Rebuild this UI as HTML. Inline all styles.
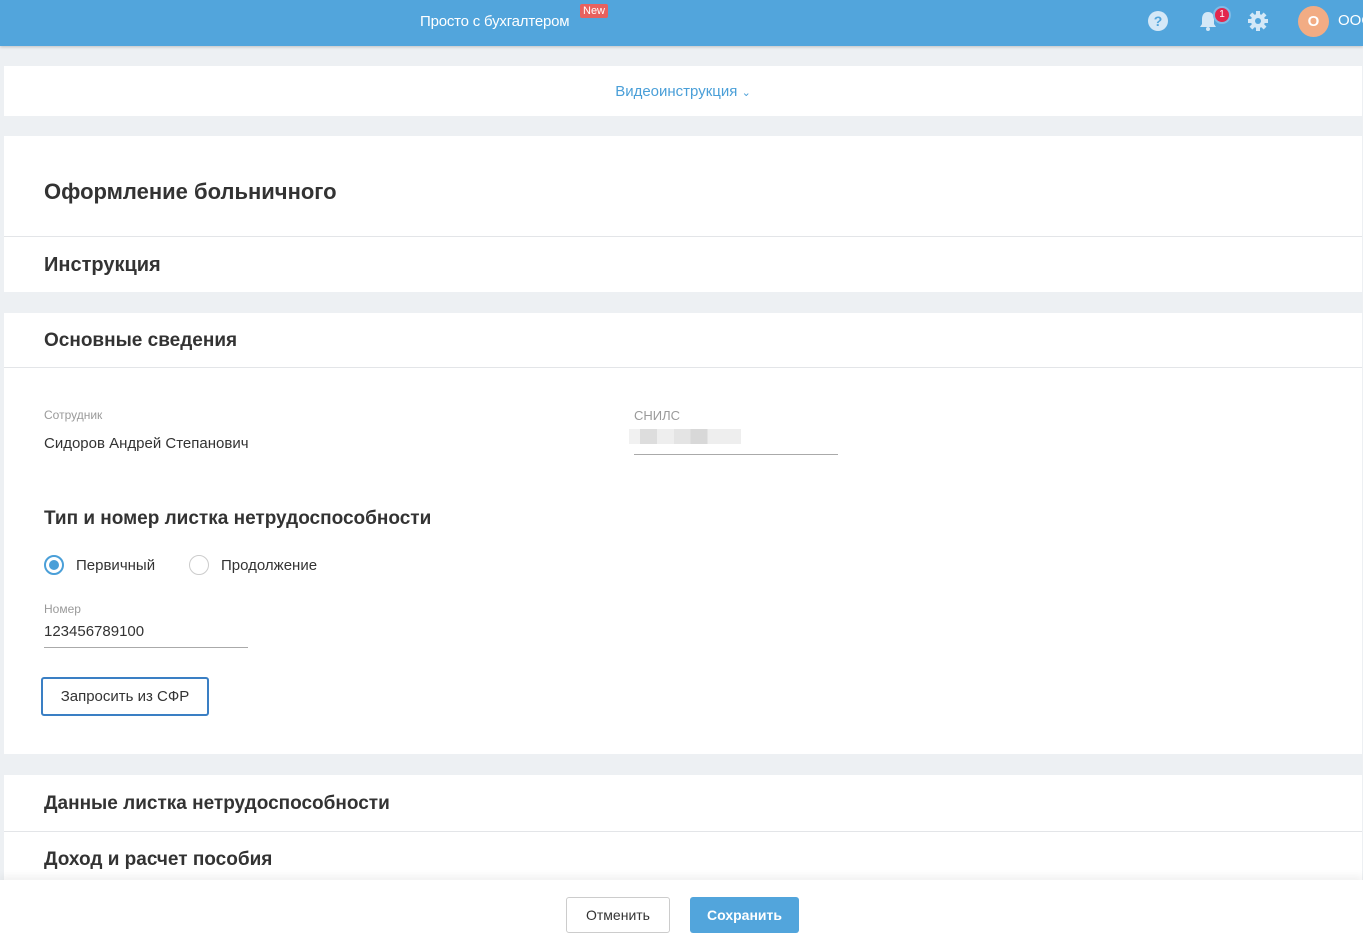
<!DOCTYPE html>
<html><head><meta charset="utf-8"><style>
*{margin:0;padding:0;box-sizing:border-box}
body{width:1363px;height:943px;overflow:hidden;background:#edf0f3;font-family:"Liberation Sans",sans-serif;color:#333;position:relative}
.hdr{position:absolute;left:0;top:0;width:1363px;height:46px;background:#52a5dc;box-shadow:0 1px 3px rgba(0,0,0,.2)}
.card{position:absolute;left:4px;width:1358px;background:#fff}
.t{position:absolute;left:40px;font-weight:bold;color:#333}
.div{position:absolute;left:0;right:0;height:1px;background:#e3e5e8}
.lbl{position:absolute;font-size:12px;color:#9a9a9a}
.txt{position:absolute;font-size:15px;color:#333}
</style></head><body>
<div class="hdr">
<div style="position:absolute;left:420px;top:13px;color:#fff;font-size:15px;letter-spacing:-.2px">Просто с бухгалтером</div>
<div style="position:absolute;left:580px;top:4px;background:#e8615e;color:#fff;font-size:11px;padding:1px 3px;border-radius:2px">New</div>
<svg style="position:absolute;left:1147px;top:10px" width="22" height="22" viewBox="0 0 22 22"><circle cx="11" cy="11" r="10" fill="#d4e8f7"/><text x="11" y="16" text-anchor="middle" font-size="14" font-weight="bold" fill="#52a5dc" font-family="Liberation Sans">?</text></svg>
<svg style="position:absolute;left:1198px;top:9px" width="22" height="24" viewBox="0 0 22 24"><path d="M10 3c-4 0-6 3-6 7v5l-2 3h16l-2-3v-5c0-4-2-7-6-7z" fill="#d4e8f7"/><circle cx="10" cy="20" r="2" fill="#d4e8f7"/></svg>
<div style="position:absolute;left:1213px;top:6px;width:18px;height:18px;border-radius:50%;background:#e3274d;border:2px solid #7fbbe6;color:#fff;font-size:10px;text-align:center;line-height:14px">1</div>
<svg style="position:absolute;left:1247px;top:10px" width="22" height="22" viewBox="0 0 22 22"><g fill="#d4e8f7"><circle cx="11" cy="11" r="7"/><rect x="9" y="1" width="4" height="20"/><rect x="1" y="9" width="20" height="4"/><rect x="9" y="1" width="4" height="20" transform="rotate(45 11 11)"/><rect x="9" y="1" width="4" height="20" transform="rotate(-45 11 11)"/></g><circle cx="11" cy="11" r="3" fill="#52a5dc"/></svg>
<div style="position:absolute;left:1298px;top:6px;width:31px;height:31px;border-radius:50%;background:#f2ac84;color:#fff;font-weight:bold;font-size:15px;text-align:center;line-height:31px">О</div>
<div style="position:absolute;left:1338px;top:12px;color:#fff;font-size:15px">ООО</div>
</div>
<div class="card" style="top:66px;height:50px"><div style="position:absolute;left:0;right:0;top:17px;text-align:center;color:#4a9fd8;font-size:15px">Видеоинструкция <span style="font-size:11px">&#8964;</span></div></div>
<div class="card" style="top:136px;height:156px">
<div class="t" style="top:43px;font-size:22px">Оформление больничного</div>
<div class="div" style="top:100px"></div>
<div class="t" style="top:118px;font-size:20px">Инструкция</div>
</div>
<div class="card" style="top:313px;height:441px">
<div class="t" style="top:17px;font-size:19px">Основные сведения</div>
<div class="div" style="top:54px"></div>
<div class="lbl" style="left:40px;top:95px">Сотрудник</div>
<div class="txt" style="left:40px;top:122px">Сидоров Андрей Степанович</div>
<div class="lbl" style="left:630px;top:95px;font-size:13px">СНИЛС</div>
<div style="position:absolute;left:625px;top:116px;width:112px;height:15px;background:linear-gradient(90deg,#f1f1f1 0 10%,#ddd 10% 25%,#eee 25% 40%,#e4e4e4 40% 55%,#d8d8d8 55% 70%,#eee 70%)"></div>
<div style="position:absolute;left:630px;top:141px;width:204px;height:1px;background:#aaa"></div>
<div class="t" style="top:195px;font-size:19px">Тип и номер листка нетрудоспособности</div>
<div style="position:absolute;left:40px;top:242px;width:20px;height:20px;border-radius:50%;border:2px solid #4a9fd8"><div style="margin:3px;width:10px;height:10px;border-radius:50%;background:#4a9fd8"></div></div>
<div class="txt" style="left:72px;top:244px">Первичный</div>
<div style="position:absolute;left:185px;top:242px;width:20px;height:20px;border-radius:50%;border:1px solid #ccc"></div>
<div class="txt" style="left:217px;top:244px">Продолжение</div>
<div class="lbl" style="left:40px;top:289px">Номер</div>
<div class="txt" style="left:40px;top:310px">123456789100</div>
<div style="position:absolute;left:40px;top:334px;width:204px;height:1px;background:#aaa"></div>
<div style="position:absolute;left:37px;top:364px;width:168px;height:39px;border:2px solid #3a7fc4;border-radius:3px;font-size:15px;text-align:center;line-height:35px">Запросить из СФР</div>
</div>
<div class="card" style="top:775px;height:168px">
<div class="t" style="top:18px;font-size:19px">Данные листка нетрудоспособности</div>
<div class="div" style="top:56px"></div>
<div class="t" style="top:74px;font-size:19px">Доход и расчет пособия</div>
</div>
<div style="position:absolute;left:0;top:880px;width:1363px;height:63px;background:#fff;box-shadow:0 -4px 8px rgba(0,0,0,.06)">
<div style="position:absolute;left:566px;top:17px;width:104px;height:36px;border:1px solid #ccc;border-radius:3px;font-size:14px;text-align:center;line-height:34px">Отменить</div>
<div style="position:absolute;left:690px;top:17px;width:109px;height:36px;background:#52a5dc;border-radius:3px;color:#fff;font-size:14px;font-weight:bold;text-align:center;line-height:36px">Сохранить</div>
</div>
</body></html>
